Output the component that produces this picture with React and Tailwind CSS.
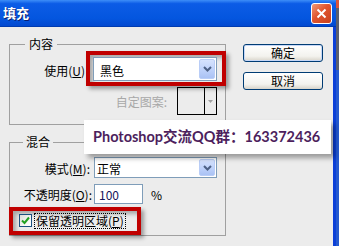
import React from "react";

function Chevron() {
  return (
    <svg width="9" height="6" viewBox="0 0 9 6">
      <path d="M1 1 L4.5 4.5 L8 1" fill="none" stroke="#4d6185" strokeWidth="2" />
    </svg>
  );
}

function DropBtn() {
  return (
    <div className="w-[16px] m-[1px] ml-auto flex items-center justify-center rounded-[2px] border border-[#b9cdf7] bg-[linear-gradient(180deg,#d6e3fd_0%,#bcd0fa_60%,#aac2f4_100%)]">
      <Chevron />
    </div>
  );
}

export default function App() {
  return (
    <div className="w-[339px] h-[246px] flex overflow-hidden font-['Noto_Sans_CJK_SC',sans-serif] text-[12px] leading-none text-black">
      <div className="w-[336px] flex flex-col relative">
        {/* title bar */}
        <div className="h-[27px] flex items-center justify-between pl-[3px] pr-[4px] border-b border-[#003bb0] bg-[linear-gradient(180deg,#3d8ef8_0%,#0c5ce6_14%,#0456df_70%,#0249d0_100%)]">
          <span className="text-[13px] font-bold text-white [text-shadow:1px_1px_0_#0a1f70] mt-[-1px]">填充</span>
          <div className="w-[21px] h-[21px] rounded-[3px] border border-white flex items-center justify-center bg-[linear-gradient(135deg,#f29a78_0%,#e0552f_45%,#c9401c_100%)]">
            <svg width="11" height="11" viewBox="0 0 11 11">
              <path d="M1.5 1.5 L9.5 9.5 M9.5 1.5 L1.5 9.5" stroke="#fff" strokeWidth="2" />
            </svg>
          </div>
        </div>

        {/* body */}
        <div className="flex-1 flex bg-[#0b3fd8]">
          <div className="w-[333px] bg-[#ececec] flex">
            {/* left column */}
            <div className="pl-[9px] pt-[17px] w-[226px] flex flex-col">
              {/* 内容 */}
              <div className="relative w-[217px] h-[81px] border border-[#a0a0a0] flex flex-col">
                <span className="absolute left-[15px] top-[-8px] px-[4px] h-[14px] leading-[14px] bg-[#ececec]">内容</span>
                <div className="flex mt-[6px]">
                  <div className="w-[76px] text-right pt-[14px] pr-[1px]">
                    使用(<span className="underline">U</span>)
                  </div>
                  <div className="w-[140px] h-[35px] mr-[-1px] border-4 border-[#c00000] pl-[3px] pt-[2px] shadow-[3px_3px_4px_rgba(0,0,0,0.35),inset_3px_3px_4px_rgba(0,0,0,0.3)]">
                    <div className="w-[124px] h-[24px] flex border border-[#7f9db9] bg-white">
                      <span className="pl-[6px] pt-[7px]">黑色</span>
                      <DropBtn />
                    </div>
                  </div>
                </div>
                <div className="flex justify-end items-center mt-[1px] pr-[8px]">
                  <span className="text-[#a8a8a8] mt-[1px]">自定图案:</span>
                  <div className="ml-[10px] w-[40px] h-[28px] border border-black flex">
                    <div className="w-[26px]" />
                    <div className="flex-1 border-l border-black flex items-center justify-center">
                      <svg width="5" height="3" viewBox="0 0 5 3">
                        <path d="M0 0 L5 0 L2.5 3 Z" fill="#a0a0a0" />
                      </svg>
                    </div>
                  </div>
                </div>
              </div>

              {/* 混合 */}
              <div className="relative mt-[17px] w-[217px] h-[94px] border border-[#a0a0a0] flex flex-col">
                <span className="absolute left-[13px] top-[-8px] px-[3px] h-[14px] leading-[14px] bg-[#ececec]">混合</span>
                <div className="flex items-center mt-[14px]">
                  <div className="w-[84px] text-right pr-[4px] pt-[2px]">
                    模式(<span className="underline">M</span>):
                  </div>
                  <div className="w-[123px] h-[21px] flex border border-[#7f9db9] bg-white">
                    <span className="pl-[2px] pt-[5px]">正常</span>
                    <DropBtn />
                  </div>
                </div>
                <div className="flex items-center mt-[6px]">
                  <div className="w-[84px] text-right pr-[2px] pt-[2px]">
                    不透明度(<span className="underline">O</span>):
                  </div>
                  <div className="w-[49px] h-[20px] flex items-center border border-[#7f9db9] bg-white pl-[4px] pt-[2px] text-[#14145a]">
                    100
                  </div>
                  <span className="ml-[8px] pt-[2px]">%</span>
                </div>
                <div className="mt-[3px] ml-[-1px] w-[132px] h-[28px] border-4 border-[#c00000] flex items-start pl-[6px] pt-[2px] shadow-[3px_3px_4px_rgba(0,0,0,0.35),inset_3px_3px_4px_rgba(0,0,0,0.3)]">
                  <div className="mt-[1px] w-[13px] h-[13px] border border-[#1c5180] bg-[linear-gradient(135deg,#dcdcd7_0%,#f6f6f4_60%,#ffffff_100%)] flex items-center justify-center">
                    <svg width="9" height="9" viewBox="0 0 9 9">
                      <path d="M1 4.5 L3.5 7 L8 1.5" fill="none" stroke="#21a121" strokeWidth="2" />
                    </svg>
                  </div>
                  <div className="ml-[2px] h-[16px] border border-dotted border-black px-[1px] flex items-center">
                    保留透明区域(<span className="underline">P</span>)
                  </div>
                </div>
              </div>
            </div>

            {/* buttons */}
            <div className="pl-[17px] pt-[17px] flex flex-col">
              <button className="w-[80px] h-[18px] rounded-[3px] border border-[#003c74] bg-[linear-gradient(180deg,#ffffff_0%,#f3f2ee_70%,#d8d4ca_100%)] shadow-[inset_0_0_0_1px_#c6d7f7] flex items-center justify-center leading-none">
                确定
              </button>
              <button className="mt-[10px] w-[80px] h-[18px] rounded-[3px] border border-[#003c74] bg-[linear-gradient(180deg,#ffffff_0%,#f3f2ee_70%,#d8d4ca_100%)] flex items-center justify-center leading-none">
                取消
              </button>
            </div>
          </div>
        </div>

        {/* overlay banner */}
        <div className="absolute left-[84px] top-[120px] w-[247px] h-[34px] bg-white flex items-center pl-[9px] shadow-[4px_4px_5px_rgba(0,0,0,0.35)] font-['Lato','Noto_Sans_CJK_SC',sans-serif] text-[14.5px] font-bold text-[#4d1f5d] whitespace-nowrap">
          Photoshop交流QQ群：163372436
        </div>
      </div>

      {/* outside strip */}
      <div className="w-[3px] flex flex-col">
        <div className="h-[8px] bg-[#d9533a]" />
        <div className="h-[62px] bg-[#5a5f6e]" />
        <div className="flex-1 bg-[#2459cf]" />
      </div>
    </div>
  );
}
